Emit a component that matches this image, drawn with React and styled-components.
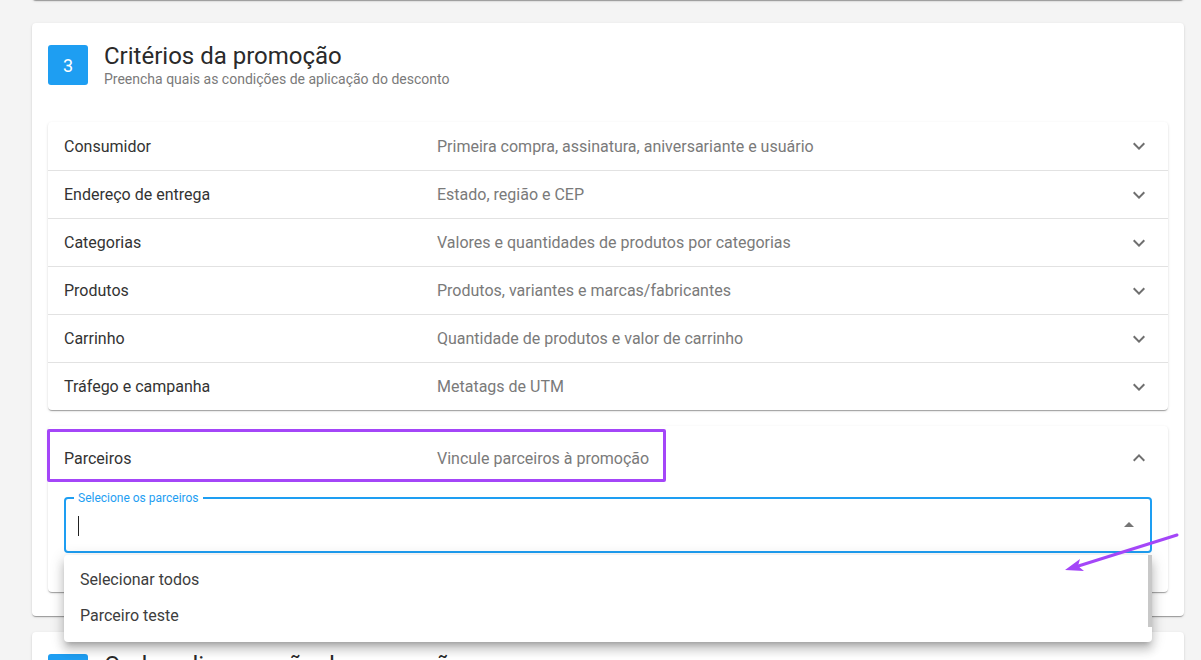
import React from "react";
import styled, { createGlobalStyle } from "styled-components";

const GlobalStyle = createGlobalStyle`
  html, body {
    margin: 0;
    padding: 0;
    background: #f4f4f4;
    font-family: Roboto, "Liberation Sans", Arial, sans-serif;
    overflow: hidden;
  }
`;

const Page = styled.div`
  position: relative;
  height: 660px;
  overflow: hidden;
  padding: 0 17px 0 32px;
  display: flex;
  flex-direction: column;
  gap: 16px;
`;

const Card = styled.section`
  position: relative;
  background: #fff;
  border-radius: 4px;
  box-shadow: 0 2px 1px -1px rgba(0, 0, 0, 0.2), 0 1px 1px 0 rgba(0, 0, 0, 0.14),
    0 1px 3px 0 rgba(0, 0, 0, 0.12);
  padding: 22px 16px 24px;
  flex-shrink: 0;
  z-index: ${(p) => p.$z || 0};
`;

const PrevCard = styled(Card)`
  height: 40px;
  padding: 0;
  margin-top: -40px;
  margin-bottom: 7px;
`;

const Header = styled.div`
  display: flex;
  align-items: flex-start;
  gap: 16px;
`;

const Badge = styled.div`
  width: 40px;
  height: 40px;
  border-radius: 3px;
  background: #1e9ef2;
  color: #fff;
  font-size: 18px;
  display: flex;
  align-items: center;
  justify-content: center;
`;

const Titles = styled.div`
  display: flex;
  flex-direction: column;
`;

const Title = styled.h2`
  margin: 0;
  font-size: 24px;
  font-weight: 400;
  line-height: 22px;
  color: #2a2a2a;
`;

const Subtitle = styled.p`
  margin: 2px 0 0;
  font-size: 14px;
  line-height: 20px;
  color: #7a7a7a;
`;

const Accordion = styled.div`
  position: relative;
  background: #fff;
  border-radius: 4px;
  box-shadow: 0 2px 1px -1px rgba(0, 0, 0, 0.2), 0 1px 1px 0 rgba(0, 0, 0, 0.14),
    0 1px 3px 0 rgba(0, 0, 0, 0.12);
  margin-top: ${(p) => p.$mt || 0}px;
`;

const Row = styled.div`
  display: grid;
  grid-template-columns: 373px 1fr 24px;
  align-items: center;
  height: ${(p) => (p.$open ? 64 : 48)}px;
  padding: 0 17px 0 16px;
  box-sizing: border-box;
  border-top: ${(p) => (p.$first ? "none" : "1px solid #e2e2e2")};
  font-size: 16px;
`;

const Label = styled.span`
  color: #333;
`;

const Desc = styled.span`
  color: #7a7a7a;
`;

const Highlight = styled.div`
  position: absolute;
  left: -1px;
  top: 3px;
  width: 619px;
  height: 53px;
  box-sizing: border-box;
  border: 3px solid #a446f8;
  border-radius: 2px;
  pointer-events: none;
`;

const Details = styled.div`
  padding: 7px 16px 39px;
`;

const SelectBox = styled.div`
  position: relative;
  height: 56px;
  box-sizing: border-box;
  border: 2px solid #1e9ef2;
  border-radius: 4px;
  display: flex;
  align-items: center;
  padding: 0 12px;
`;

const FieldLabel = styled.span`
  position: absolute;
  top: -9px;
  left: 8px;
  padding: 0 4px;
  background: #fff;
  color: #1e9ef2;
  font-size: 12px;
  line-height: 16px;
`;

const Caret = styled.span`
  width: 1px;
  height: 20px;
  background: #222;
  margin-top: 2px;
`;

const DropIcon = styled.svg`
  margin-left: auto;
  margin-right: -3px;
  fill: #757575;
`;

const Menu = styled.ul`
  position: absolute;
  left: -2px;
  right: -2px;
  top: 56px;
  margin: 0;
  padding: 6px 0 9px;
  list-style: none;
  background: #fff;
  border-radius: 4px;
  box-shadow: 0 5px 5px -3px rgba(0, 0, 0, 0.2), 0 8px 10px 1px rgba(0, 0, 0, 0.14),
    0 3px 14px 2px rgba(0, 0, 0, 0.12);
  z-index: 10;
`;

const MenuItem = styled.li`
  height: 36px;
  display: flex;
  align-items: center;
  padding: 0 16px;
  font-size: 16px;
  color: #3d3d3d;
`;

const ScrollThumb = styled.div`
  position: absolute;
  right: 0;
  top: 0;
  width: 4px;
  height: 72px;
  background: #c8c8c8;
`;

const Arrow = styled.svg`
  position: absolute;
  left: 1060px;
  top: 530px;
  z-index: 20;
  overflow: visible;
`;

const rows = [
  ["Consumidor", "Primeira compra, assinatura, aniversariante e usuário"],
  ["Endereço de entrega", "Estado, região e CEP"],
  ["Categorias", "Valores e quantidades de produtos por categorias"],
  ["Produtos", "Produtos, variantes e marcas/fabricantes"],
  ["Carrinho", "Quantidade de produtos e valor de carrinho"],
  ["Tráfego e campanha", "Metatags de UTM"],
];

function Chevron({ up }) {
  return (
    <svg width="24" height="24" viewBox="0 0 24 24" fill="#6f6f6f">
      {up ? (
        <path d="m12 8-6 6 1.41 1.41L12 10.83l4.59 4.58L18 14z" />
      ) : (
        <path d="M16.59 8.59 12 13.17 7.41 8.59 6 10l6 6 6-6z" />
      )}
    </svg>
  );
}

export default function App() {
  return (
    <>
      <GlobalStyle />
      <Page>
        <PrevCard />
        <Card $z={2}>
          <Header>
            <Badge>3</Badge>
            <Titles>
              <Title>Critérios da promoção</Title>
              <Subtitle>Preencha quais as condições de aplicação do desconto</Subtitle>
            </Titles>
          </Header>

          <Accordion $mt={33}>
            {rows.map(([label, desc], i) => (
              <Row key={label} $first={i === 0}>
                <Label>{label}</Label>
                <Desc>{desc}</Desc>
                <Chevron />
              </Row>
            ))}
          </Accordion>

          <Accordion $mt={16}>
            <Row $first $open>
              <Label>Parceiros</Label>
              <Desc>Vincule parceiros à promoção</Desc>
              <Chevron up />
            </Row>
            <Highlight />
            <Details>
              <SelectBox>
                <FieldLabel>Selecione os parceiros</FieldLabel>
                <Caret />
                <DropIcon width="24" height="24" viewBox="0 0 24 24">
                  <path d="m7 14 5-5 5 5z" />
                </DropIcon>
                <Menu>
                  <ScrollThumb />
                  <MenuItem>Selecionar todos</MenuItem>
                  <MenuItem>Parceiro teste</MenuItem>
                </Menu>
              </SelectBox>
            </Details>
          </Accordion>
        </Card>

        <Card $z={1}>
          <Header>
            <Badge>4</Badge>
            <Titles>
              <Title>Onde aplicar a ação da promoção</Title>
              <Subtitle>Defina onde o desconto será aplicado</Subtitle>
            </Titles>
          </Header>
        </Card>

        <Arrow width="120" height="45" viewBox="0 0 120 45">
          <line x1="117" y1="5" x2="12" y2="38" stroke="#a446f8" strokeWidth="3" strokeLinecap="round" />
          <path d="M5 40 L20 29 L18 36 L24 41 Z" fill="#a446f8" />
        </Arrow>
      </Page>
    </>
  );
}
